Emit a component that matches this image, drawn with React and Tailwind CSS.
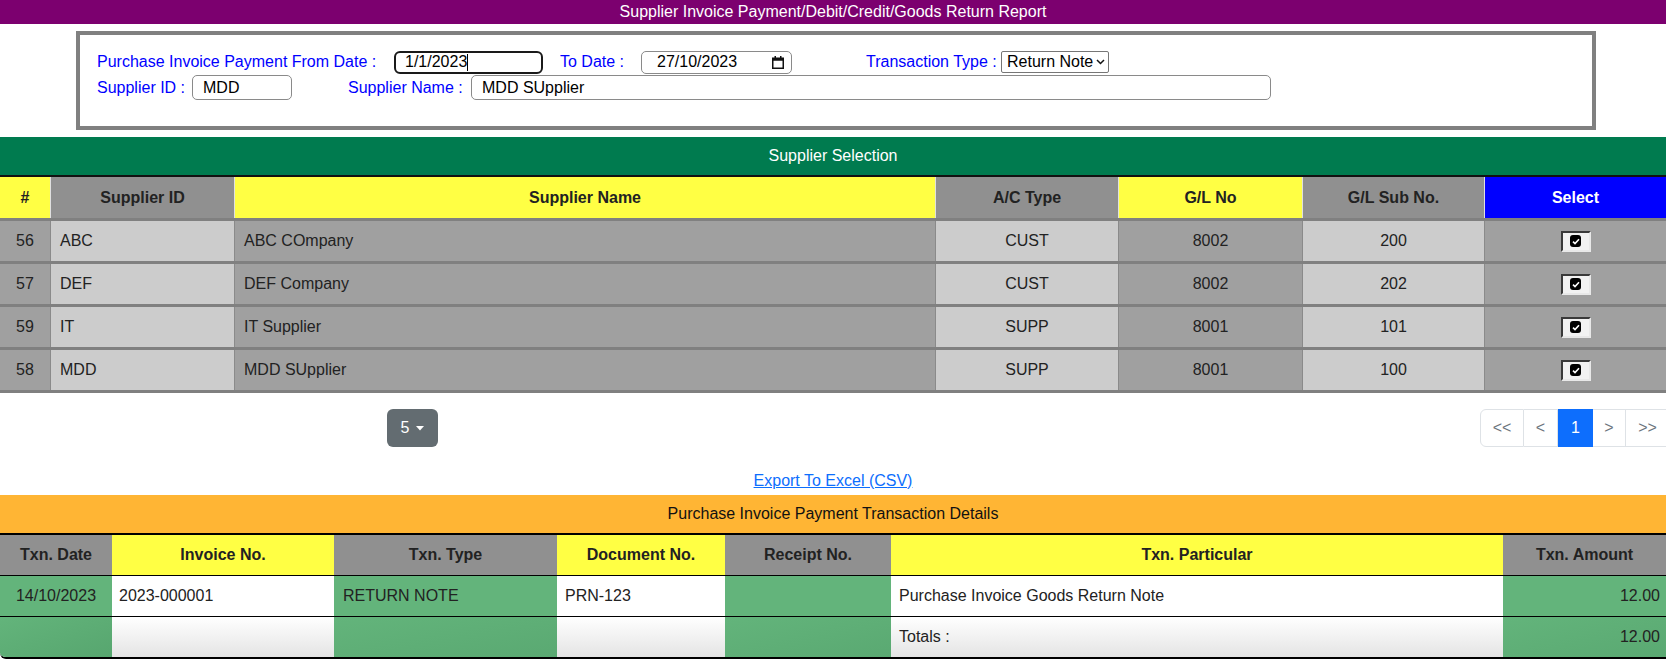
import React from 'react';

const suppliers = [
  { no: '56', id: 'ABC', name: 'ABC COmpany', type: 'CUST', gl: '8002', sub: '200' },
  { no: '57', id: 'DEF', name: 'DEF Company', type: 'CUST', gl: '8002', sub: '202' },
  { no: '59', id: 'IT', name: 'IT Supplier', type: 'SUPP', gl: '8001', sub: '101' },
  { no: '58', id: 'MDD', name: 'MDD SUpplier', type: 'SUPP', gl: '8001', sub: '100' },
];

const supCols = 'grid grid-cols-[51px_184px_701px_183px_184px_182px_181px]';
const txCols = 'grid grid-cols-[112px_222px_223px_168px_166px_612px_163px]';

const Checkbox = () => (
  <span className="inline-flex items-center justify-center w-[30px] h-[21px] bg-[#f2f2f2] border-2 border-t-[#3a3a3a] border-l-[#3a3a3a] border-b-[#e8e8e8] border-r-[#e8e8e8]">
    <span className="flex items-center justify-center w-[11px] h-[12px] rounded-[3px] bg-black">
      <svg width="8" height="7" viewBox="0 0 8 7">
        <path d="M1 3.6 L3 5.6 L7 1.2" fill="none" stroke="white" strokeWidth="1.6" />
      </svg>
    </span>
  </span>
);

const CalendarIcon = () => (
  <svg width="12" height="13" viewBox="0 0 12 13">
    <rect x="0.75" y="2.25" width="10.5" height="10" fill="none" stroke="#111" strokeWidth="1.5" />
    <rect x="0.75" y="2.25" width="10.5" height="2.5" fill="#111" />
    <rect x="2.5" y="0" width="1.5" height="3" fill="#111" />
    <rect x="8" y="0" width="1.5" height="3" fill="#111" />
  </svg>
);

const th = 'flex items-center justify-center font-bold text-[#222]';

export default function App() {
  return (
    <div className="w-[1666px] h-[662px] overflow-hidden bg-white font-['Liberation_Sans',Arial,sans-serif] text-base text-[#222]">
      <div className="h-6 bg-[#7c006f] text-white text-center leading-6">
        Supplier Invoice Payment/Debit/Credit/Goods Return Report
      </div>

      {/* filter box */}
      <div className="mt-[7px] ml-[76px] w-[1520px] h-[99px] border-4 border-[#808080] pt-[15px] pl-[17px]">
        <div className="flex items-center h-6 text-[#0000ff] whitespace-nowrap">
          <span className="w-[297px]">Purchase Invoice Payment From Date :</span>
          <div className="flex items-center w-[149px] h-[23px] border-2 border-[#1a1a1a] rounded-[6px] pl-[9px] text-black">
            1/1/2023<span className="w-px h-[17px] bg-black" />
          </div>
          <span className="ml-[17px] w-[81px]">To Date :</span>
          <div className="flex items-center justify-between w-[151px] h-[23px] border border-[#8a8a8a] rounded-[5px] pl-[15px] pr-[7px] text-black">
            <span>27/10/2023</span>
            <CalendarIcon />
          </div>
          <span className="ml-[74px] w-[135px]">Transaction Type :</span>
          <div className="flex items-center w-[108px] h-[22px] border border-[#767676] rounded-[2px] pl-[5px] text-black">
            <span>Return Note</span>
            <svg className="ml-[3px]" width="9" height="6" viewBox="0 0 9 6">
              <path d="M1 1 L4.5 4.5 L8 1" fill="none" stroke="#111" strokeWidth="1.5" />
            </svg>
          </div>
        </div>
        <div className="flex items-center h-[25px] mt-px text-[#0000ff] whitespace-nowrap">
          <span className="w-[95px]">Supplier ID :</span>
          <div className="flex items-center w-[100px] h-[25px] border border-[#8a8a8a] rounded-[5px] pl-[10px] text-black">MDD</div>
          <span className="ml-[56px] w-[123px]">Supplier Name :</span>
          <div className="flex items-center w-[800px] h-[25px] border border-[#8a8a8a] rounded-[5px] pl-[10px] text-black">MDD SUpplier</div>
        </div>
      </div>

      {/* supplier selection */}
      <div className="mt-[7px] h-10 bg-[#007b4f] text-white flex items-center justify-center border-b-2 border-[#111]">
        Supplier Selection
      </div>
      <div className={`${supCols} h-[44px] border-b-[3px] border-[#808080]`}>
        <div className={`${th} bg-[#ffff44] border-r border-[#e0e0e0]`}>#</div>
        <div className={`${th} bg-[#909090] border-r border-[#e0e0e0]`}>Supplier ID</div>
        <div className={`${th} bg-[#ffff44] border-r border-[#e0e0e0]`}>Supplier Name</div>
        <div className={`${th} bg-[#909090] border-r border-[#e0e0e0]`}>A/C Type</div>
        <div className={`${th} bg-[#ffff44] border-r border-[#e0e0e0]`}>G/L No</div>
        <div className={`${th} bg-[#909090] border-r border-[#e0e0e0]`}>G/L Sub No.</div>
        <div className={`${th} bg-[#0000ff] text-white`}>Select</div>
      </div>
      {suppliers.map((s) => (
        <div key={s.no} className={`${supCols} h-[43px] border-b-[3px] border-[#808080]`}>
          <div className="flex items-center justify-center bg-[#a0a0a0] border-r border-[#8a8a8a]">{s.no}</div>
          <div className="flex items-center pl-[9px] bg-[#cccccc] border-r border-[#8a8a8a]">{s.id}</div>
          <div className="flex items-center pl-[9px] bg-[#a0a0a0] border-r border-[#8a8a8a]">{s.name}</div>
          <div className="flex items-center justify-center bg-[#cccccc] border-r border-[#8a8a8a]">{s.type}</div>
          <div className="flex items-center justify-center bg-[#a0a0a0] border-r border-[#8a8a8a]">{s.gl}</div>
          <div className="flex items-center justify-center bg-[#cccccc] border-r border-[#8a8a8a]">{s.sub}</div>
          <div className="flex items-center justify-center bg-[#a0a0a0]">
            <Checkbox />
          </div>
        </div>
      ))}

      {/* paging */}
      <div className="mt-4 flex items-center justify-between h-[38px]">
        <button className="ml-[387px] flex items-center justify-center gap-[7px] w-[51px] h-[38px] rounded-[6px] bg-[#636c71] text-white">
          5
          <svg width="8" height="5" viewBox="0 0 8 5">
            <path d="M0 0 L8 0 L4 4.5 Z" fill="white" />
          </svg>
        </button>
        <div className="flex h-[38px] -mr-1 text-[#6c757d]">
          <span className="flex items-center justify-center w-[44px] border border-[#dee2e6] rounded-l-[6px]">&lt;&lt;</span>
          <span className="flex items-center justify-center w-[34px] border border-l-0 border-[#dee2e6]">&lt;</span>
          <span className="flex items-center justify-center w-[35px] bg-[#0d6efd] text-white">1</span>
          <span className="flex items-center justify-center w-[33px] border border-l-0 border-[#dee2e6]">&gt;</span>
          <span className="flex items-center justify-center w-[44px] border border-l-0 border-[#dee2e6]">&gt;&gt;</span>
        </div>
      </div>

      <div className="h-12 pt-5 flex items-center justify-center">
        <a href="#" className="text-base text-[#0d6efd] underline">Export To Excel (CSV)</a>
      </div>

      {/* transaction details */}
      <div className="h-10 bg-[#ffb534] flex items-center justify-center border-b-2 border-black text-[#111]">
        Purchase Invoice Payment Transaction Details
      </div>
      <div className={`${txCols} h-[41px] border-b border-black`}>
        <div className={`${th} bg-[#909090]`}>Txn. Date</div>
        <div className={`${th} bg-[#ffff44]`}>Invoice No.</div>
        <div className={`${th} bg-[#909090]`}>Txn. Type</div>
        <div className={`${th} bg-[#ffff44]`}>Document No.</div>
        <div className={`${th} bg-[#909090]`}>Receipt No.</div>
        <div className={`${th} bg-[#ffff44]`}>Txn. Particular</div>
        <div className={`${th} bg-[#909090]`}>Txn. Amount</div>
      </div>
      <div className={`${txCols} h-[41px] border-b border-black`}>
        <div className="flex items-center justify-center bg-[#63b47b]">14/10/2023</div>
        <div className="flex items-center pl-[7px] bg-white">2023-000001</div>
        <div className="flex items-center pl-[9px] bg-[#63b47b]">RETURN NOTE</div>
        <div className="flex items-center pl-2 bg-white">PRN-123</div>
        <div className="bg-[#63b47b]" />
        <div className="flex items-center pl-2 bg-white">Purchase Invoice Goods Return Note</div>
        <div className="flex items-center justify-end pr-[6px] bg-[#63b47b]">12.00</div>
      </div>
      <div className={`${txCols} h-[42px] border-b-2 border-black rounded-bl-[6px] overflow-hidden`}>
        <div className="bg-linear-to-br from-[#63b47b] to-[#57a66f]" />
        <div className="bg-linear-to-b from-white to-[#e4e4e4]" />
        <div className="bg-linear-to-br from-[#63b47b] to-[#5aa972]" />
        <div className="bg-linear-to-b from-white to-[#e4e4e4]" />
        <div className="bg-linear-to-br from-[#63b47b] to-[#5aa972]" />
        <div className="flex items-center pl-2 bg-linear-to-b from-white to-[#e4e4e4]">Totals :</div>
        <div className="flex items-center justify-end pr-[6px] bg-linear-to-br from-[#63b47b] to-[#5aa972]">12.00</div>
      </div>
    </div>
  );
}
